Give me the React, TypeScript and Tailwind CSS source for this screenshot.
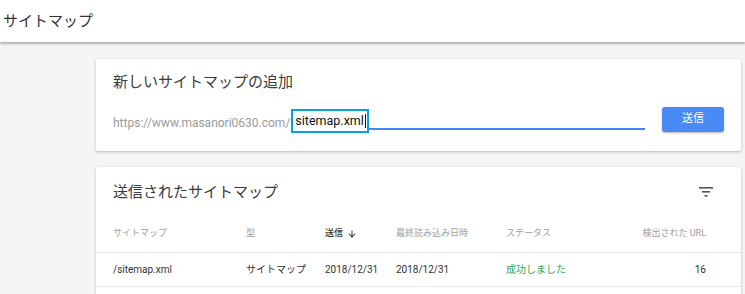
import { ArrowDown } from "lucide-react";

const font = "font-['Roboto','Noto_Sans_CJK_JP',sans-serif]";

function FilterIcon() {
  return (
    <svg width="14" height="10" viewBox="0 0 14 10" className="text-[#555]">
      <rect x="0" y="0" width="14" height="1.6" fill="currentColor" />
      <rect x="3" y="4" width="8" height="1.6" fill="currentColor" />
      <rect x="5.5" y="8" width="3" height="1.6" fill="currentColor" />
    </svg>
  );
}

const cols = "grid grid-cols-[133px_79px_71px_110px_1fr_auto] items-center";

export default function App() {
  return (
    <div className={`${font} w-[745px] h-[294px] overflow-hidden bg-[#f5f5f5]`}>
      <header className="h-[42px] bg-white flex items-center pl-[3px] shadow-[0_2px_2px_rgba(0,0,0,0.28)] relative z-10">
        <h1 className="text-[15px] text-[#333]">サイトマップ</h1>
      </header>

      <main className="pl-[96px] pr-[4px] pt-[17px] flex flex-col gap-[16px]">
        <section className="bg-white rounded-[2px] shadow-[0_1px_3px_rgba(0,0,0,0.25)] h-[92px] pl-[17px] pr-[17px] pt-[12px]">
          <h2 className="text-[15px] leading-[22px] text-[#3c3c3c]">新しいサイトマップの追加</h2>
          <div className="flex items-start mt-[14px] h-[25px]">
            <div className="flex items-end w-[532px] h-[24px]">
              <span className="text-[12px] leading-[20px] text-[#9a9a9a] whitespace-nowrap mb-[-2px]">
                https://www.masanori0630.com/
              </span>
              <span className="ml-[1px] h-[24px] w-[78px] border-[2.5px] border-[#0aa0e4] flex items-center pl-[2px] text-[12.5px] text-[#111] mb-[-2px] bg-white">
                sitemap.xml
                <span className="ml-[1px] w-px h-[14px] bg-[#111]" />
              </span>
              <div className="flex-1 border-b-2 border-[#4285f4] mb-[1px]" />
            </div>
            <button className="ml-[17px] w-[62px] h-[25px] rounded-[3px] bg-[#4a8af4] text-white text-[11px] shadow-[0_1px_2px_rgba(0,0,0,0.3)]">
              送信
            </button>
          </div>
        </section>

        <section className="bg-white rounded-[2px] shadow-[0_1px_3px_rgba(0,0,0,0.25)] h-[140px]">
          <div className="flex items-center justify-between pl-[17px] pr-[28px] pt-[12px] h-[38px]">
            <h2 className="text-[15px] text-[#3c3c3c]">送信されたサイトマップ</h2>
            <FilterIcon />
          </div>
          <div className={`${cols} pl-[17px] pr-[35px] h-[48px] pt-[10px] text-[9px] text-[#9e9e9e] border-b border-[#e8e8e8]`}>
            <span>サイトマップ</span>
            <span>型</span>
            <span className="flex items-center gap-[4px] text-[#333] font-medium">
              送信 <ArrowDown size={10} strokeWidth={2.5} />
            </span>
            <span>最終読み込み日時</span>
            <span>ステータス</span>
            <span className="text-right">検出された URL</span>
          </div>
          <div className={`${cols} pl-[17px] pr-[35px] h-[34px] text-[10px] text-[#333] border-b border-[#e8e8e8]`}>
            <span>/sitemap.xml</span>
            <span>サイトマップ</span>
            <span>2018/12/31</span>
            <span>2018/12/31</span>
            <span className="text-[#34a853]">成功しました</span>
            <span className="text-right">16</span>
          </div>
        </section>
      </main>
    </div>
  );
}
